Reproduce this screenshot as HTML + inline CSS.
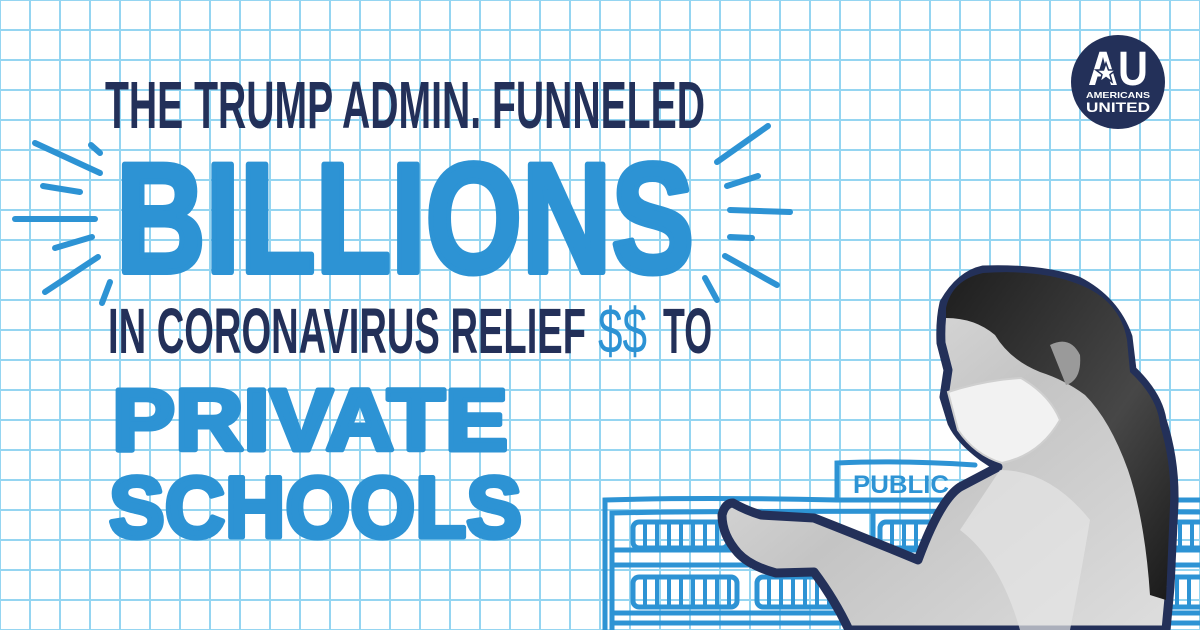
<!DOCTYPE html>
<html><head><meta charset="utf-8"><style>
html,body{margin:0;padding:0}
body{width:1200px;height:630px;overflow:hidden;background:#fff;position:relative;
background-image:linear-gradient(90deg,#95d5f1 2px,transparent 2px),linear-gradient(180deg,#95d5f1 2px,transparent 2px);
background-size:30px 30px;background-position:-1px -1px}
svg{position:absolute;left:0;top:0}
</style></head><body>
<svg width="1200" height="630" viewBox="0 0 1200 630">
<defs>
<linearGradient id="skin" x1="0" y1="0" x2="1" y2="1"><stop offset="0" stop-color="#ececec"/><stop offset="0.5" stop-color="#c4c4c4"/><stop offset="1" stop-color="#dedede"/></linearGradient>
<linearGradient id="hair" x1="0" y1="0" x2="1" y2="1"><stop offset="0" stop-color="#1e1e1e"/><stop offset="0.6" stop-color="#474747"/><stop offset="1" stop-color="#1a1a1a"/></linearGradient>
</defs>
<g stroke="#2d93d4" stroke-width="6" stroke-linecap="round" fill="none">
<path d="M35 143 L100 173"/><path d="M91 145 L100 153"/><path d="M43 186 L80 192"/><path d="M15 219 L95 219"/><path d="M55 248 L92 237"/><path d="M45 292 L98 257"/><path d="M110 282 L102 303"/>
<path d="M717 162 L768 126"/><path d="M727 186 L758 176"/><path d="M730 210 L790 212"/><path d="M730 237 L752 238"/><path d="M725 256 L777 285"/><path d="M705 278 L717 300"/>
</g>
<g font-family="'Liberation Sans Narrow','Liberation Sans',sans-serif" font-weight="bold" fill="#233059">
<text x="105" y="128" font-size="67" textLength="600" lengthAdjust="spacingAndGlyphs">THE TRUMP ADMIN. FUNNELED</text>
<text x="108" y="353" font-size="64" textLength="478" lengthAdjust="spacingAndGlyphs">IN CORONAVIRUS RELIEF</text>
<text x="598" y="353" font-size="64" textLength="49" lengthAdjust="spacingAndGlyphs" fill="#2d93d4" font-weight="normal">$$</text>
<text x="663" y="353" font-size="64" textLength="49" lengthAdjust="spacingAndGlyphs">TO</text>
</g>
<g font-family="'Liberation Sans',sans-serif" font-weight="bold" fill="#2d93d4" stroke="#2d93d4" stroke-linejoin="round">
<text x="116" y="272" font-size="156" stroke-width="6" textLength="578" lengthAdjust="spacingAndGlyphs">BILLIONS</text>
<text x="112" y="450" font-size="87" stroke-width="5" textLength="396" lengthAdjust="spacingAndGlyphs">PRIVATE</text>
<text x="109" y="537" font-size="86" stroke-width="5" textLength="413" lengthAdjust="spacingAndGlyphs">SCHOOLS</text>
</g>
<g stroke="#2d93d4" stroke-width="5" fill="none" stroke-linecap="round">
<path d="M605 630 L605 500 Q700 497 837 500 L1200 500"/>
<path d="M612 630 L612 513 Q750 510 1200 512"/>
<path d="M837 500 L837 463 Q900 460 975 465"/>
<path d="M612 550 L1200 550"/><path d="M612 565 L1200 565"/>
<path d="M612 613 L1200 613"/><path d="M612 623 L1200 623"/>
<path d="M873 513 L873 630"/>
<rect x="633" y="522" width="95" height="26" rx="6"/>
<rect x="880" y="522" width="80" height="26" rx="6"/>
<rect x="633" y="577" width="104" height="30" rx="6"/>
<rect x="757" y="577" width="90" height="30" rx="6"/>
<rect x="1170" y="522" width="40" height="26" rx="6"/>
<rect x="1165" y="577" width="45" height="30" rx="6"/>
<path d="M645 522V548M657 522V548M669 522V548M681 522V548M693 522V548M705 522V548M717 522V548M645 577V607M657 577V607M669 577V607M681 577V607M693 577V607M705 577V607M717 577V607M729 577V607M769 577V607M781 577V607M793 577V607M805 577V607M817 577V607M829 577V607M892 522V548M904 522V548M916 522V548M1180 522V548M1192 522V548M1177 577V607M1189 577V607" stroke-width="4"/>
</g>
<text x="853" y="493" font-family="'Liberation Sans',sans-serif" font-weight="bold" font-size="25" fill="#2d93d4" textLength="96" lengthAdjust="spacingAndGlyphs">PUBLIC</text>
<path d="M983 270 Q1040 268 1078 281 Q1115 300 1128 337 L1132 370 Q1158 395 1162 420 Q1175 460 1174 503 L1170 587 L1166 630 L849 630 Q835 600 814 572 L776 573 Q750 566 738 553 Q722 535 722 515 Q725 503 733 503 Q745 510 761 515 L814 518 Q870 540 918 560 Q940 500 960 487 L998 467 L983 457 Q960 440 952 423 L944 397 L948 370 L941 343 Q940 320 944 303 Q960 275 983 270 Z" fill="url(#skin)" stroke="#233059" stroke-width="9" stroke-linejoin="round"/>
<path d="M946 308 Q952 280 983 273 Q1040 269 1078 284 Q1120 300 1127 340 L1130 372 Q1158 398 1160 425 Q1172 465 1170 505 L1166 600 L1150 595 Q1145 520 1128 470 Q1110 420 1085 395 Q1065 380 1040 372 Q1010 360 995 335 Q975 318 946 318 Z" fill="url(#hair)"/>
<path d="M1050 345 Q1070 335 1080 355 Q1082 380 1066 385 Z" fill="#9a9a9a"/>
<path d="M948 392 Q985 380 1021 378 Q1050 395 1060 420 Q1040 455 1002 463 Q975 455 958 430 Z" fill="#f2f2f2" stroke="#cfcfcf" stroke-width="2"/>
<path d="M1000 470 Q1050 470 1090 520 Q1080 580 1070 630 L1020 630 Q1000 560 960 530 Z" fill="#e6e6e6" opacity="0.7"/>
<circle cx="1118" cy="82" r="47" fill="#233059"/>
<text x="1118" y="85" text-anchor="middle" font-family="'Liberation Sans',sans-serif" font-weight="bold" font-size="48" fill="#fff" textLength="60" lengthAdjust="spacingAndGlyphs">AU</text>
<polygon points="1106,63 1108.5,70 1116,70 1110,74.5 1112,82 1106,77.5 1100,82 1102,74.5 1096,70 1103.5,70" fill="#fff" stroke="#233059" stroke-width="1.5"/>
<text x="1118" y="98" text-anchor="middle" font-family="'Liberation Sans',sans-serif" font-weight="bold" font-size="8.5" fill="#fff" textLength="64" lengthAdjust="spacingAndGlyphs">AMERICANS</text>
<text x="1118" y="112" text-anchor="middle" font-family="'Liberation Sans',sans-serif" font-weight="bold" font-size="13.5" fill="#fff" textLength="64" lengthAdjust="spacingAndGlyphs">UNITED</text>
</svg>
</body></html>
